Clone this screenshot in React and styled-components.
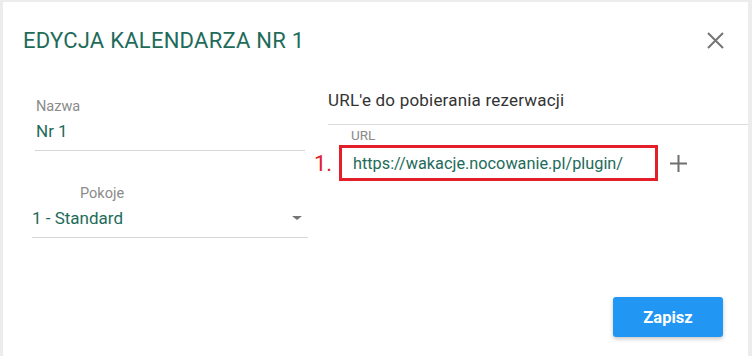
import React from 'react';
import styled, { createGlobalStyle } from 'styled-components';

const Global = createGlobalStyle`
  html, body {
    margin: 0;
    padding: 0;
    background: #ececec;
    font-family: Roboto, "Liberation Sans", sans-serif;
  }
`;

const Dialog = styled.div`
  margin: 2px 4px 0 3px;
  height: 354px;
  background: #fff;
  box-sizing: border-box;
  display: flex;
  flex-direction: column;
`;

const Header = styled.div`
  display: flex;
  align-items: center;
  justify-content: space-between;
  padding: 24px 24px 0 20px;
  height: 52px;
  box-sizing: border-box;
`;

const Title = styled.h2`
  margin: 0;
  font-weight: 400;
  font-size: 22px;
  color: #1e6b5a;
  letter-spacing: 0.25px;
`;

const Close = styled.button`
  border: 0;
  background: none;
  padding: 0;
  width: 18px;
  height: 18px;
  display: flex;
  align-items: center;
  justify-content: center;
  color: #757575;
`;

const Body = styled.div`
  display: flex;
  padding: 44px 0 0 29px;
`;

const LeftCol = styled.div`
  width: 276px;
  display: flex;
  flex-direction: column;
  gap: 34px;
`;

const Field = styled.div`
  border-bottom: 1px solid #d6d6d6;
  padding: 0 0 8px 0;
  margin: 0 ${p => p.$inset || 0}px;
  position: relative;
`;

const Label = styled.div`
  font-size: 14.5px;
  color: #8a8a8a;
  padding-left: ${p => p.$pad ?? 1}px;
  line-height: 18px;
`;

const Value = styled.div`
  font-size: 17px;
  color: #1e6b5a;
  padding-left: ${p => p.$pad ?? 1}px;
  line-height: 22px;
  margin-top: 4px;
`;

const Arrow = styled.span`
  position: absolute;
  right: 6px;
  bottom: 17px;
  width: 0;
  height: 0;
  border-left: 5px solid transparent;
  border-right: 5px solid transparent;
  border-top: 4px solid #757575;
`;

const RightCol = styled.div`
  margin-left: 20px;
  flex: 1;
`;

const Section = styled.div`
  font-size: 17px;
  letter-spacing: 0.2px;
  color: #333;
  line-height: 22px;
  margin-top: -9px;
  padding-bottom: 13px;
  border-bottom: 1px solid #dcdcdc;
`;

const UrlLabel = styled.div`
  font-size: 13.5px;
  color: #8a8a8a;
  margin: 3px 0 0 23px;
  line-height: 14px;
`;

const UrlRow = styled.div`
  display: flex;
  align-items: center;
  margin-left: -14px;
  margin-top: 3px;
`;

const Num = styled.span`
  color: #e3202a;
  font-size: 22px;
  width: 25px;
`;

const UrlBox = styled.div`
  border: 3px solid #e3202a;
  width: 302px;
  height: 30px;
  display: flex;
  align-items: center;
  padding-left: 11px;
  box-sizing: content-box;
  font-size: 16.3px;
  color: #1e6b5a;
`;

const Plus = styled.span`
  margin-left: 12px;
  color: #6f6f6f;
  display: flex;
`;

const Footer = styled.div`
  margin-top: auto;
  display: flex;
  justify-content: flex-end;
  padding: 0 25px 19px 0;
`;

const SaveButton = styled.button`
  background: #2196f3;
  color: #fff;
  border: 0;
  border-radius: 3px;
  width: 110px;
  height: 40px;
  font-family: Roboto, "Liberation Sans", sans-serif;
  font-weight: 700;
  font-size: 16.5px;
  box-shadow: 0 2px 4px rgba(0, 0, 0, 0.22);
`;

const App = () => (
  <>
    <Global />
    <Dialog>
      <Header>
        <Title>EDYCJA KALENDARZA NR 1</Title>
        <Close>
          <svg width="17" height="17" viewBox="0 0 17 17">
            <path d="M1 1L16 16M16 1L1 16" stroke="currentColor" strokeWidth="2" />
          </svg>
        </Close>
      </Header>
      <Body>
        <LeftCol>
          <Field $inset={3}>
            <Label>Nazwa</Label>
            <Value>Nr 1</Value>
          </Field>
          <Field>
            <Label $pad={48}>Pokoje</Label>
            <Value $pad={0}>1 - Standard</Value>
            <Arrow />
          </Field>
        </LeftCol>
        <RightCol>
          <Section>URL'e do pobierania rezerwacji</Section>
          <UrlLabel>URL</UrlLabel>
          <UrlRow>
            <Num>1.</Num>
            <UrlBox>https://wakacje.nocowanie.pl/plugin/</UrlBox>
            <Plus>
              <svg width="17" height="17" viewBox="0 0 17 17">
                <path d="M8.5 0V17M0 8.5H17" stroke="currentColor" strokeWidth="2" />
              </svg>
            </Plus>
          </UrlRow>
        </RightCol>
      </Body>
      <Footer>
        <SaveButton>Zapisz</SaveButton>
      </Footer>
    </Dialog>
  </>
);

export default App;
